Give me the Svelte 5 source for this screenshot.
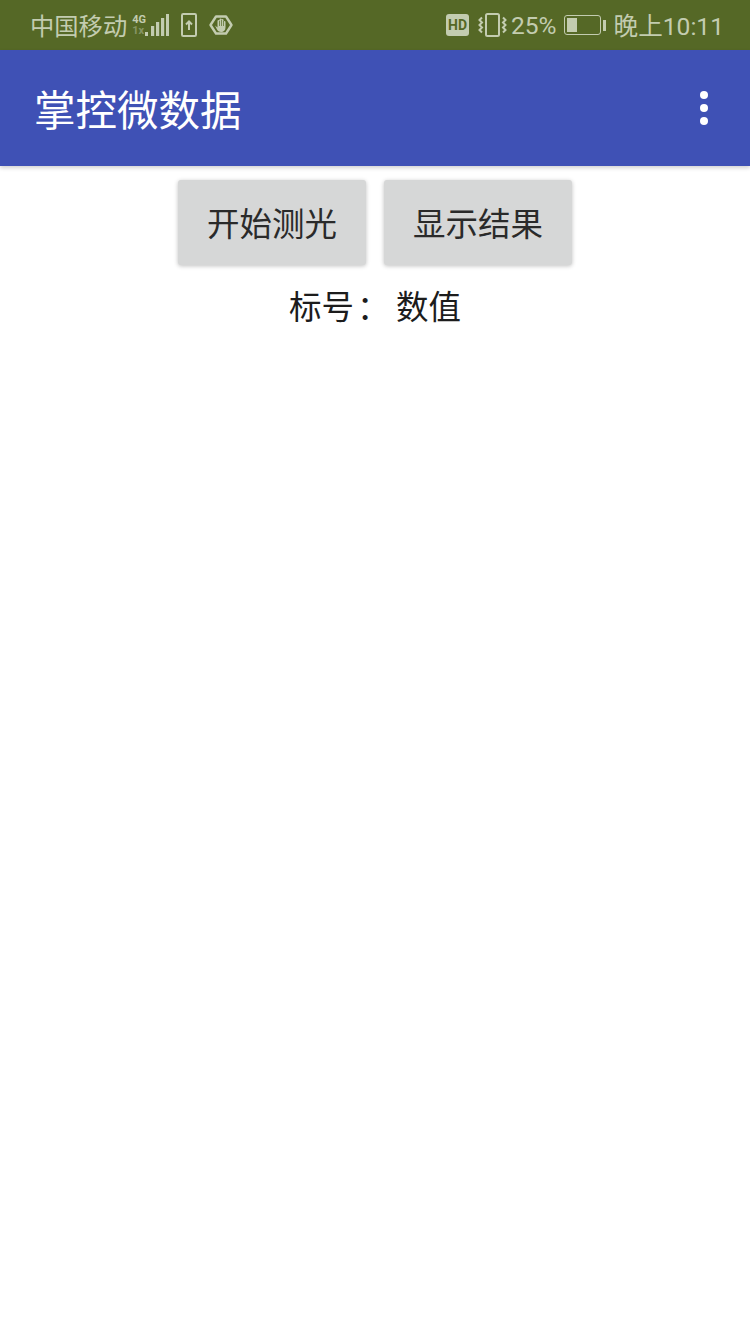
<script>
  let title = '掌控微数据';
</script>

<div class="screen">
  <div class="status-bar">
    <div class="status-left">
      <span class="carrier">中国移动</span>
      <span class="signal">
        <span class="net"><span class="net-4g">4G</span><span class="net-1x">1x</span></span>
        <svg width="24" height="24" viewBox="0 0 24 24">
          <rect x="0" y="19" width="3" height="4" />
          <rect x="6" y="13" width="3.2" height="10" />
          <rect x="11" y="9" width="3.2" height="14" />
          <rect x="16" y="5" width="3.2" height="18" />
          <rect x="21" y="1" width="3" height="22" />
        </svg>
      </span>
      <svg class="upload" width="16" height="24" viewBox="0 0 16 24">
        <rect x="1" y="1" width="14" height="22" rx="1.2" fill="none" stroke="currentColor" stroke-width="2" />
        <path d="M8 17V8.5M5 11.5l3-3 3 3" fill="none" stroke="currentColor" stroke-width="2" />
      </svg>
      <svg class="hand" width="24" height="20" viewBox="0 0 24 20">
        <path d="M7 1.5h10l5.500 8.500-5.500 8.500H7L1.500 10z" fill="none" stroke="currentColor" stroke-width="2.400" stroke-linejoin="round" />
        <path d="M6 10.500l2.500 2V6a1 1 0 0 1 2 0V4.500a1 1 0 0 1 2 0V5a1 1 0 0 1 2 0v2a1 1 0 0 1 2 0v5.500c0 2.800-1.800 4.500-4.300 4.500-2.200 0-3.400-1-4.200-2.500z" />
        <path d="M10.500 6v5M12.500 5v6M14.500 6v5" fill="none" stroke="#556826" stroke-width="0.7" />
      </svg>
    </div>
    <div class="status-right">
      <span class="hd">HD</span>
      <svg class="vibrate" width="29" height="24" viewBox="0 0 29 24">
        <rect x="8" y="1" width="13" height="22" rx="1.500" fill="none" stroke="currentColor" stroke-width="2" />
        <path d="M4 4.500L1.500 7 4 9.500 1.500 12 4 14.500 1.500 17 4 19.500M25 4.500L27.500 7 25 9.500 27.500 12 25 14.500 27.500 17 25 19.500" fill="none" stroke="currentColor" stroke-width="2" />
      </svg>
      <span class="percent">25%</span>
      <span class="battery">
        <span class="battery-body"><span class="battery-fill"></span></span>
        <span class="battery-tip"></span>
      </span>
      <span class="clock">晚上10:11</span>
    </div>
  </div>

  <header class="app-bar">
    <h1>{title}</h1>
    <div class="overflow"><span></span><span></span><span></span></div>
  </header>

  <main class="content">
    <div class="buttons">
      <button>开始测光</button>
      <button>显示结果</button>
    </div>
    <div class="labels">
      <span class="label-name">标号<span class="colon">：</span></span>
      <span>数值</span>
    </div>
  </main>
</div>

<style>
  :global(body) {
    margin: 0;
    background: #fff;
    font-family: Roboto, "Noto Sans CJK SC", sans-serif;
  }

  .screen {
    display: flex;
    flex-direction: column;
    height: 1333px;
    overflow: hidden;
  }

  .status-bar {
    display: flex;
    justify-content: space-between;
    align-items: center;
    box-sizing: border-box;
    height: 50px;
    padding: 0 26px 0 30px;
    background: #556826;
    color: #c3ccb0;
  }

  .status-left,
  .status-right {
    display: flex;
    align-items: center;
  }

  .carrier {
    font-size: 24.3px;
    line-height: 30px;
    margin-top: 3px;
    margin-right: 5px;
  }

  .signal {
    display: flex;
    align-items: center;
  }

  .signal svg {
    fill: currentColor;
  }

  .net {
    display: flex;
    flex-direction: column;
    width: 13px;
    font-size: 11px;
    line-height: 11px;
    font-weight: 700;
  }

  .net-1x {
    opacity: 0.45;
  }

  .upload {
    margin-left: 12px;
  }

  .hand {
    margin-left: 12px;
    fill: currentColor;
  }

  .hd {
    display: flex;
    align-items: center;
    justify-content: center;
    width: 23px;
    height: 22px;
    border-radius: 3px;
    background: #c3ccb0;
    color: #556826;
    font-size: 14px;
    font-weight: 700;
  }

  .vibrate {
    margin-left: 9px;
  }

  .percent {
    font-size: 24.5px;
    line-height: 30px;
    margin-left: 4px;
    margin-top: 2px;
  }

  .battery {
    display: flex;
    align-items: center;
    margin-left: 7px;
  }

  .battery-body {
    box-sizing: border-box;
    display: block;
    width: 37px;
    height: 20px;
    padding: 2px;
    border: 1.5px solid #c3ccb0;
    border-radius: 3px;
  }

  .battery-fill {
    display: block;
    width: 10px;
    height: 100%;
    background: #c3ccb0;
  }

  .battery-tip {
    width: 3px;
    height: 11px;
    margin-left: 2px;
    background: #c3ccb0;
  }

  .clock {
    font-size: 24.6px;
    line-height: 30px;
    margin-top: 3px;
    margin-left: 8px;
  }

  .app-bar {
    display: flex;
    justify-content: space-between;
    align-items: center;
    height: 116px;
    padding: 0 35px 0 34px;
    background: #3f51b5;
    color: #fff;
    box-shadow: 0 2px 4px rgba(0, 0, 0, 0.18);
    position: relative;
  }

  h1 {
    margin: 0;
    font-size: 41.5px;
    font-weight: 400;
  }

  .overflow {
    display: flex;
    flex-direction: column;
    gap: 5px;
    margin-right: 7px;
  }

  .overflow span {
    width: 8px;
    height: 8px;
    border-radius: 50%;
    background: #fff;
  }

  .content {
    display: flex;
    flex-direction: column;
    align-items: center;
    padding-top: 14px;
  }

  .buttons {
    display: flex;
    gap: 18px;
  }

  button {
    width: 188px;
    height: 85px;
    padding: 0 0 2px;
    border: none;
    border-radius: 3px;
    background: #d6d7d7;
    color: #2a2a2a;
    font: inherit;
    font-size: 32.5px;
    box-shadow: 0 1px 4px rgba(0, 0, 0, 0.25);
  }

  .labels {
    display: flex;
    align-items: baseline;
    margin-top: 20px;
    font-size: 32.5px;
    line-height: 46px;
    color: #1c1c1c;
  }

  .label-name {
    width: 107px;
  }

  .colon {
    margin-left: 3px;
  }
</style>
